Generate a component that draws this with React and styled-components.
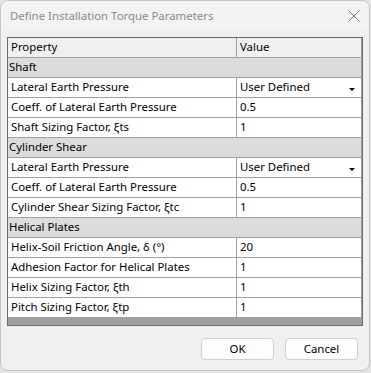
import React from "react";
import styled, { createGlobalStyle } from "styled-components";

const Global = createGlobalStyle`
  html, body { margin: 0; padding: 0; }
  body {
    width: 371px; height: 373px; overflow: hidden;
    background: #e4e4e4;
    font-family: "Noto Sans", "Open Sans", sans-serif;
  }
`;

const Window = styled.div`
  box-sizing: border-box;
  width: 370px;
  height: 371px;
  border: 1px solid #c4c4c4;
  border-radius: 8px;
  background: #f0f0f0;
  display: flex;
  flex-direction: column;
  overflow: hidden;
`;

const TitleBar = styled.div`
  height: 30px;
  flex: none;
  display: flex;
  align-items: center;
  justify-content: space-between;
  padding: 0 8px 0 9px;
  background: #f3f3f3;
`;

const Title = styled.div`
  font-size: 11.4px;
  color: #8a8a8a;
  padding-bottom: 2px;
`;

const Close = styled.svg`
  width: 12px;
  height: 12px;
  margin-right: 1px;
`;

const Body = styled.div`
  flex: 1;
  display: flex;
  flex-direction: column;
  padding: 6px 6px 0 6px;
`;

const Grid = styled.div`
  box-sizing: border-box;
  width: 356px;
  height: 289px;
  border: 1px solid #6a6a6a;
  background: #a0a0a0;
  display: flex;
  flex-direction: column;
`;

const Row = styled.div`
  display: grid;
  grid-template-columns: 229px 1fr;
  height: 20px;
  box-sizing: border-box;
  border-bottom: 1px solid #a0a0a0;
  background: ${(p) => (p.$header ? "#f0f0f0" : "#ffffff")};
  flex: none;
`;

const Cell = styled.div`
  position: relative;
  box-sizing: border-box;
  font-size: 11.4px;
  color: #000;
  line-height: 18px;
  white-space: nowrap;
  overflow: hidden;
  padding-left: 3px;
  border-right: 1px solid #a0a0a0;
`;

const CategoryRow = styled.div`
  height: 20px;
  box-sizing: border-box;
  border-bottom: 1px solid #a0a0a0;
  border-right: 1px solid #a0a0a0;
  background: #dcdcdc;
  font-size: 11.4px;
  line-height: 18px;
  padding-left: 1px;
  color: #000;
  flex: none;
`;

const Arrow = styled.span`
  position: absolute;
  right: 6px;
  top: 10px;
  width: 0;
  height: 0;
  border-left: 3px solid transparent;
  border-right: 3px solid transparent;
  border-top: 3px solid #000;
`;

const Footer = styled.div`
  display: flex;
  justify-content: flex-end;
  gap: 11px;
  padding: 12px 5px 0 0;
`;

const Button = styled.button`
  box-sizing: border-box;
  width: 73px;
  height: 22px;
  background: #fdfdfd;
  border: 1px solid #d0d0d0;
  border-radius: 4px;
  font-family: "Noto Sans", sans-serif;
  font-size: 11.4px;
  color: #000;
  padding: 0;
  line-height: 18px;
`;

const data = [
  { cat: "Shaft" },
  { p: "Lateral Earth Pressure", v: "User Defined", dd: true },
  { p: "Coeff. of Lateral Earth Pressure", v: "0.5" },
  { p: "Shaft Sizing Factor, ξts", v: "1" },
  { cat: "Cylinder Shear" },
  { p: "Lateral Earth Pressure", v: "User Defined", dd: true },
  { p: "Coeff. of Lateral Earth Pressure", v: "0.5" },
  { p: "Cylinder Shear Sizing Factor, ξtc", v: "1" },
  { cat: "Helical Plates" },
  { p: "Helix-Soil Friction Angle, δ (°)", v: "20" },
  { p: "Adhesion Factor for Helical Plates", v: "1" },
  { p: "Helix Sizing Factor, ξth", v: "1" },
  { p: "Pitch Sizing Factor, ξtp", v: "1" },
];

export default function App() {
  return (
    <>
      <Global />
      <Window>
        <TitleBar>
          <Title>Define Installation Torque Parameters</Title>
          <Close viewBox="0 0 12 12">
            <path d="M0.5 0.5 L11.5 11.5 M11.5 0.5 L0.5 11.5" stroke="#7a7a7a" strokeWidth="1" fill="none" />
          </Close>
        </TitleBar>
        <Body>
          <Grid>
            <Row $header>
              <Cell>Property</Cell>
              <Cell>Value</Cell>
            </Row>
            {data.map((d, i) =>
              d.cat ? (
                <CategoryRow key={i}>{d.cat}</CategoryRow>
              ) : (
                <Row key={i}>
                  <Cell>{d.p}</Cell>
                  <Cell>
                    {d.v}
                    {d.dd && <Arrow />}
                  </Cell>
                </Row>
              )
            )}
          </Grid>
          <Footer>
            <Button>OK</Button>
            <Button>Cancel</Button>
          </Footer>
        </Body>
      </Window>
    </>
  );
}
